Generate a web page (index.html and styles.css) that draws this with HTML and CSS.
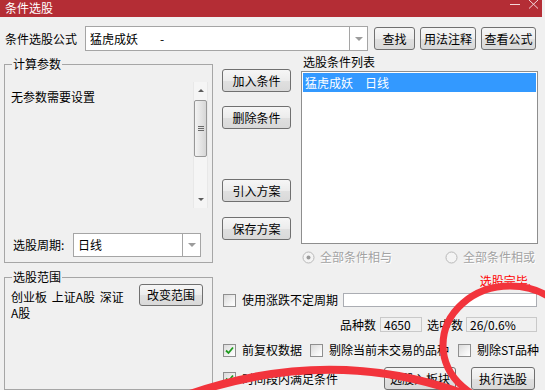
FILE: index.html
```html
<!DOCTYPE html>
<html lang="zh-CN">
<head>
  <meta charset="UTF-8">
  <title>条件选股</title>
  <link rel="stylesheet" href="styles.css">
</head>
<body>
<div class="window">

  <div class="titlebar">
    <span class="title">条件选股</span>
    <svg class="win-ctl" width="31" height="12" viewBox="0 0 31 12">
      <line x1="1" y1="4.5" x2="11" y2="4.5" stroke="#f3d6d8" stroke-width="1"/>
      <line x1="20" y1="0" x2="29" y2="8.5" stroke="#f3d6d8" stroke-width="1"/>
      <line x1="29" y1="0" x2="20" y2="8.5" stroke="#f3d6d8" stroke-width="1"/>
    </svg>
  </div>

  <!-- baris rumus -->
  <div class="formula-row">
    <span class="formula-label">条件选股公式</span>
    <div class="combo formula-combo">
      <span class="combo-text">猛虎成妖<span class="dash">-</span></span>
      <span class="combo-btn"><i class="arrow-down"></i></span>
    </div>
    <button class="btn btn-find">查找</button>
    <button class="btn btn-note">用法注释</button>
    <button class="btn btn-view">查看公式</button>
  </div>

  <div class="main">

    <div class="left-col">
      <fieldset class="group group-params">
        <legend>计算参数</legend>
        <div class="params-body">
          <div class="param-text">无参数需要设置</div>
          <div class="scrollbar">
            <span class="sb-arrow"><i class="tri-up"></i></span>
            <span class="sb-thumb"><i class="grip"></i></span>
            <span class="sb-track"></span>
            <span class="sb-arrow"><i class="tri-down"></i></span>
          </div>
        </div>
        <div class="period-row">
          <span class="period-label">选股周期:</span>
          <div class="combo period-combo">
            <span class="combo-text">日线</span>
            <span class="combo-btn"><i class="arrow-down"></i></span>
          </div>
        </div>
      </fieldset>

      <fieldset class="group group-range">
        <legend>选股范围</legend>
        <div class="range-body">
          <div class="range-text">创业板 上证A股 深证A股</div>
          <button class="btn btn-range">改变范围</button>
        </div>
      </fieldset>
    </div>

    <div class="right-col">
      <div class="cond-area">
        <div class="cond-buttons">
          <button class="btn btn-add">加入条件</button>
          <button class="btn btn-del">删除条件</button>
          <button class="btn btn-import">引入方案</button>
          <button class="btn btn-save">保存方案</button>
        </div>
        <div class="cond-list">
          <div class="list-label">选股条件列表</div>
          <div class="listbox">
            <div class="list-item selected">猛虎成妖<span class="period-tag">日线</span></div>
          </div>
          <div class="radio-row">
            <label class="radio">
              <svg width="13" height="13" viewBox="0 0 13 13">
                <circle cx="6.5" cy="6.5" r="5.5" fill="#f4f4f4" stroke="#b9b9b9"/>
                <circle cx="6.5" cy="6.5" r="2" fill="#9a9a9a"/>
              </svg>
              <span>全部条件相与</span>
            </label>
            <label class="radio radio-or">
              <svg width="13" height="13" viewBox="0 0 13 13">
                <circle cx="6.5" cy="6.5" r="5.5" fill="#f4f4f4" stroke="#b9b9b9"/>
              </svg>
              <span>全部条件相或</span>
            </label>
          </div>
        </div>
      </div>

      <div class="status">选股完毕.</div>

      <div class="opt-row row-period">
        <span class="cb"></span>
        <span class="cb-text">使用涨跌不定周期</span>
        <span class="textbox period-box"></span>
      </div>

      <div class="count-row">
        <span>品种数</span>
        <span class="textbox readonly count-total">4650</span>
        <span class="count-label">选中数</span>
        <span class="textbox readonly count-hit">26/0.6%</span>
      </div>

      <div class="opt-row row-flags">
        <span class="cb checked"><svg width="11" height="11" viewBox="0 0 11 11"><polyline points="2,5.5 4.5,8 9,2.5" fill="none" stroke="#1f9b1f" stroke-width="1.8"/></svg></span>
        <span class="cb-text">前复权数据</span>
        <span class="cb cb-2"></span>
        <span class="cb-text">剔除当前未交易的品种</span>
        <span class="cb cb-3"></span>
        <span class="cb-text">剔除ST品种</span>
      </div>

      <div class="opt-row row-actions">
        <span class="cb checked"><svg width="11" height="11" viewBox="0 0 11 11"><polyline points="2,5.5 4.5,8 9,2.5" fill="none" stroke="#1f9b1f" stroke-width="1.8"/></svg></span>
        <span class="cb-text">时间段内满足条件</span>
        <button class="btn btn-block">选股入板块</button>
        <button class="btn btn-run">执行选股</button>
      </div>
    </div>

  </div>

  <!-- coretan merah di atas screenshot -->
  <svg class="marks" width="545" height="390" viewBox="0 0 545 390">
    <ellipse cx="510" cy="345" rx="67" ry="59" fill="none" stroke="#f2343c" stroke-width="7"/>
    <path d="M 190 394 Q 330 346 462 393" fill="none" stroke="#f2343c" stroke-width="8" stroke-linecap="round"/>
  </svg>

</div>
</body>
</html>
```

FILE: styles.css
```css
* {
  box-sizing: border-box;
}

body {
  margin: 0;
  width: 545px;
  height: 390px;
  overflow: hidden;
  background: #f0f0f0;
  font-family: "Noto Sans CJK SC", "Noto Sans", sans-serif;
  font-size: 12px;
  line-height: 14px;
  color: #000;
}

.window {
  position: relative;
  height: 390px;
  overflow: hidden;
}

/* title bar */
.titlebar {
  width: 542px;
  height: 17px;
  background: #b42d35;
  color: #fff;
  display: flex;
  justify-content: space-between;
  align-items: flex-start;
  padding-left: 5px;
}

.title {
  font-size: 12px;
  line-height: 13px;
  padding-top: 1px;
}

.win-ctl {
  margin-right: 2px;
}

/* buttons */
.btn {
  height: 23px;
  padding: 0;
  border: 1px solid #707070;
  border-radius: 3px;
  background: linear-gradient(#f6f6f6 0%, #ececec 50%, #e0e0e0 52%, #d9d9d9 100%);
  font-family: inherit;
  font-size: 12px;
  line-height: 14px;
  color: #000;
}

/* combobox */
.combo {
  display: flex;
  background: #fff;
  border: 1px solid #a5a5a5;
}

.combo-text {
  flex: 1;
  display: flex;
  align-items: center;
  padding-left: 4px;
}

.combo-btn {
  display: flex;
  align-items: center;
  justify-content: center;
  border-left: 1px solid #a5a5a5;
}

.arrow-down {
  width: 0;
  height: 0;
  border-left: 4px solid transparent;
  border-right: 4px solid transparent;
  border-top: 4px solid #9c9c9c;
}

/* formula row */
.formula-row {
  display: flex;
  align-items: center;
  height: 25px;
  margin-top: 9px;
  padding-left: 5px;
}

.formula-label {
  width: 72px;
}

.formula-combo {
  width: 283px;
  height: 25px;
  margin-left: 8px;
}

.formula-combo .combo-btn {
  width: 18px;
}

.dash {
  margin-left: 22px;
}

.btn-find {
  width: 41px;
  margin-left: 6px;
}

.btn-note {
  width: 56px;
  margin-left: 5px;
}

.btn-view {
  width: 55px;
  margin-left: 5px;
}

/* main area */
.main {
  display: flex;
  align-items: flex-start;
}

.left-col {
  width: 209px;
  margin-left: 4px;
  margin-top: 6px;
}

.group {
  margin: 0;
  padding: 0;
  min-width: 0;
  border: 1px solid #a6a6a6;
}

.group legend {
  margin-left: 7px;
  padding: 0 1px;
  line-height: 14px;
}

.group-params {
  height: 206px;
}

.params-body {
  display: flex;
  height: 126px;
  margin-top: 11px;
  margin-right: 4px;
  padding-left: 6px;
}

.param-text {
  flex: 1;
  padding-top: 8px;
}

/* scrollbar */
.scrollbar {
  width: 15px;
  display: flex;
  flex-direction: column;
  background: #f5f5f5;
  border-left: 1px solid #e8e8e8;
  border-right: 1px solid #e8e8e8;
}

.sb-arrow {
  height: 17px;
  display: flex;
  align-items: center;
  justify-content: center;
}

.tri-up {
  border-left: 3px solid transparent;
  border-right: 3px solid transparent;
  border-bottom: 3px solid #5c5c5c;
}

.tri-down {
  border-left: 3px solid transparent;
  border-right: 3px solid transparent;
  border-top: 3px solid #5c5c5c;
}

.sb-thumb {
  height: 57px;
  margin: 1px 0 0;
  display: flex;
  align-items: center;
  justify-content: center;
  border: 1px solid #979797;
  border-radius: 2px;
  background: linear-gradient(90deg, #f3f3f3, #e2e2e2 60%, #d6d6d6);
}

.grip {
  width: 6px;
  height: 5px;
  background: repeating-linear-gradient(#6a6a6a 0 1px, transparent 1px 2px);
}

.sb-track {
  flex: 1;
}

.period-row {
  display: flex;
  align-items: center;
  height: 24px;
  margin-top: 25px;
  padding-left: 8px;
}

.period-label {
  width: 60px;
}

.period-combo {
  width: 128px;
  height: 24px;
}

.period-combo .combo-btn {
  width: 18px;
}

.group-range {
  height: 120px;
  margin-top: 7px;
}

.range-body {
  display: flex;
  align-items: flex-start;
  padding-left: 6px;
}

.range-text {
  width: 116px;
  padding-top: 5px;
  line-height: 16px;
  word-spacing: 2px;
}

.btn-range {
  width: 64px;
  height: 22px;
  margin-left: 12px;
}

/* right column */
.right-col {
  width: 323px;
  margin-left: 9px;
}

.cond-area {
  display: flex;
  align-items: flex-start;
}

.cond-buttons {
  width: 69px;
  display: flex;
  flex-direction: column;
}

.btn-add {
  margin-top: 18px;
}

.btn-del {
  margin-top: 14px;
}

.btn-import {
  margin-top: 50px;
}

.btn-save {
  margin-top: 15px;
}

.cond-list {
  width: 237px;
  margin-left: 10px;
  margin-top: 4px;
}

.list-label {
  padding-left: 2px;
}

.listbox {
  height: 173px;
  margin-top: 2px;
  padding: 1px;
  background: #fff;
  border: 1px solid #8e8e8e;
}

.list-item {
  height: 19px;
  line-height: 19px;
  padding-left: 2px;
}

.list-item.selected {
  background: #3399ff;
  color: #fff;
}

.period-tag {
  margin-left: 12px;
}

.radio-row {
  display: flex;
  align-items: center;
  height: 14px;
  margin-top: 6px;
  padding-left: 1px;
  padding-right: 3px;
}

.radio {
  display: flex;
  align-items: center;
  color: #a3a3a3;
  text-shadow: 1px 1px 0 #fff;
}

.radio span {
  margin-left: 5px;
}

.radio-or {
  margin-left: auto;
}

.status {
  margin-top: 10px;
  padding-right: 14px;
  text-align: right;
  color: #ff0000;
}

/* checkbox rows */
.opt-row {
  display: flex;
  align-items: center;
  padding-left: 1px;
}

.cb {
  width: 13px;
  height: 13px;
  flex: none;
  display: flex;
  align-items: center;
  justify-content: center;
  border: 1px solid #8f8f8f;
  background: linear-gradient(135deg, #dadada, #f6f6f6 70%, #ffffff);
}

.cb-text {
  margin-left: 6px;
}

.row-period {
  height: 14px;
  margin-top: 5px;
}

.textbox {
  display: block;
  background: #fff;
  border: 1px solid #abadb3;
}

.period-box {
  width: 194px;
  height: 14px;
  margin-left: auto;
  margin-right: 8px;
}

.count-row {
  display: flex;
  align-items: center;
  justify-content: flex-end;
  height: 15px;
  margin-top: 10px;
  padding-right: 8px;
}

.textbox.readonly {
  height: 15px;
  line-height: 13px;
  padding-left: 3px;
  background: #f0f0f0;
  border-color: #c9c9c9;
}

.count-total {
  width: 42px;
  margin-left: 4px;
}

.count-label {
  margin-left: 5px;
}

.count-hit {
  width: 71px;
  margin-left: 3px;
}

.row-flags {
  height: 14px;
  margin-top: 11px;
}

.cb-2 {
  margin-left: 8px;
}

.cb-3 {
  margin-left: 9px;
}

.row-actions {
  height: 23px;
  margin-top: 10px;
}

.btn-block {
  width: 72px;
  margin-left: auto;
}

.btn-run {
  width: 64px;
  margin-left: 15px;
  margin-right: 10px;
}

/* red annotation strokes */
.marks {
  position: absolute;
  top: 0;
  left: 0;
  pointer-events: none;
}
```
